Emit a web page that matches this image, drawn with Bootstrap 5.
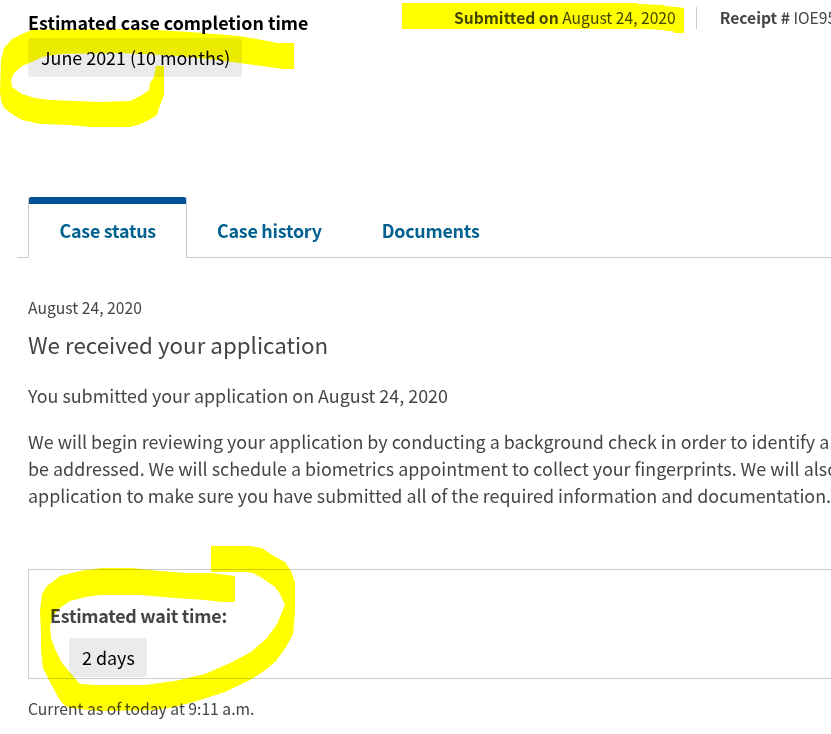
<!DOCTYPE html>
<html lang="en">
<head>
<meta charset="utf-8">
<meta name="viewport" content="width=device-width, initial-scale=1">
<title>Case status</title>
<link href="https://cdn.jsdelivr.net/npm/bootstrap@5.3.0/dist/css/bootstrap.min.css" rel="stylesheet">
<style>
  body { font-family: "Source Sans Pro", "Noto Sans CJK SC", sans-serif; font-size: 17.9px; color: #454545; background: #fff; width: 831px; height: 734px; overflow: hidden; }
  .case-header { height: 197px; padding-left: 28px; }
  .completion { padding-top: 9px; width: 426px; }
  .completion-title { font-size: 17.85px; line-height: 27px; color: #000; margin-bottom: 2px; }
  .time-chip { display: inline-block; height: 39px; line-height: 39px; padding: 0 12px 0 13px; background: #ebebeb; color: #000; border-radius: 3px; }
  .case-meta { font-size: 15.65px; line-height: 22px; padding-top: 7px; height: 29px; }
  .receipt { border-left: 1px solid #ccc; margin-left: 20px; padding-left: 23px; }
  .case-tabs { margin-left: 17px; padding-left: 11px; height: 61px; border-bottom: 1px solid #ccc; }
  .case-tabs .nav-link { height: 61px; padding: 7px 29px; line-height: 52px; letter-spacing: -.25px; color: #00608f; border: 1px solid transparent; border-width: 0 1px; border-radius: 0; font-weight: 600; }
  .case-tabs .nav-link.active { width: 159px; padding-left: 30.5px; padding-right: 0; color: #00608f; background: #fff; border-color: #ccc; position: relative; }
  .case-tabs .nav-link.active::before { content: ""; position: absolute; left: 0; right: 0; top: 0; height: 7px; background: #005096; border-radius: 2px 2px 0 0; }
  .case-body { padding: 38px 0 0 28px; }
  .event-date { font-size: 15.7px; line-height: 24px; }
  .event-title { font-size: 22.35px; line-height: 36px; font-weight: 400; margin: 6px 0 20px; }
  .event-text { line-height: 27px; margin-bottom: 19px; }
  .wait-box { height: 110px; margin-top: 60px; padding: 32px 0 0 21px; border: 1px solid #ccc; border-right: 0; }
  .wait-label { line-height: 27px; margin-bottom: 9px; letter-spacing: -.27px; }
  .wait-box .time-chip { margin-left: 19px; }
  .as-of { font-size: 15.7px; line-height: 24px; margin-top: 18px; }
  .marker-ink { position: absolute; left: 0; top: 0; mix-blend-mode: multiply; pointer-events: none; }
</style>
<script src="https://cdn.jsdelivr.net/npm/bootstrap@5.3.0/dist/js/bootstrap.bundle.min.js"></script>
</head>
<body class="position-relative text-nowrap">
<header class="case-header d-flex">
  <div class="completion flex-shrink-0">
    <h2 class="completion-title fw-bold">Estimated case completion time</h2>
    <span class="time-chip">June 2021 (10 months)</span>
  </div>
  <div class="case-meta d-flex">
    <div class="submitted"><strong>Submitted on</strong> <span>August 24, 2020</span></div>
    <div class="receipt"><strong>Receipt #</strong> <span>IOE95</span></div>
  </div>
</header>
<nav class="nav case-tabs flex-nowrap">
  <a class="nav-link active" href="#">Case status</a>
  <a class="nav-link" href="#">Case history</a>
  <a class="nav-link" href="#">Documents</a>
</nav>
<main class="case-body">
  <div class="event-date">August 24, 2020</div>
  <h3 class="event-title">We received your application</h3>
  <p class="event-text">You submitted your application on August 24, 2020</p>
  <p class="event-text"><span>We will begin reviewing your application by conducting a background check in order to identify a</span><br><span>be addressed. We will schedule a biometrics appointment to collect your fingerprints. We will also</span><br><span>application to make sure you have submitted all of the required information and documentation.</span></p>
  <section class="wait-box">
    <div class="wait-label fw-bold">Estimated wait time:</div>
    <span class="time-chip">2 days</span>
  </section>
  <div class="as-of">Current as of today at 9:11 a.m.</div>
</main>
<svg class="marker-ink" width="831" height="734" viewBox="0 0 831 734" fill="#ff0" aria-hidden="true">
  <path d="M294 43V69H283L262 66L240 63L208 59L165 55L120 53L60 54L42 57L34 61L22 66L14 73L11 80L12 87L22 94L35 98L50 100L100 102L130 101L142 95L149 90L150 83L154 77L156 66H164V95L159 108L157 115L149 120L138 125L130 127H90L70 125L40 124L22 120L12 114L4 108L1 100L0 92L1 60L4 48L12 39L22 34L32 30L60 29H140L190 32L240 36L262 40L278 43Z"/>
  <path d="M402 3H637L638 4L664 5L665 6L677 7L684 8V33H674L673 31L666 31L665 30L640 29H402Z"/>
  <path d="M211 546H250L262 548L272 555L285 562L291 571L295 582V613L293 634L286 647L276 661L264 671L250 680L225 692L200 700L175 707L155 710L100 711L70 708L64 705L58 697L50 682L43 668L41 650V635L40 610L42 594L47 586L60 576L80 571L102 568H132L160 571L185 573H210L235 576V602H222L205 600L175 598L140 595H100L86 597L70 601L60 608L53 616L50 626L51 638L55 649L62 663L72 675L80 684L95 685H145L175 681L205 674L230 663L251 652L267 638L277 624L285 605L280 594L275 587L262 578L253 573L247 572H211Z"/>
</svg>
</body>
</html>
